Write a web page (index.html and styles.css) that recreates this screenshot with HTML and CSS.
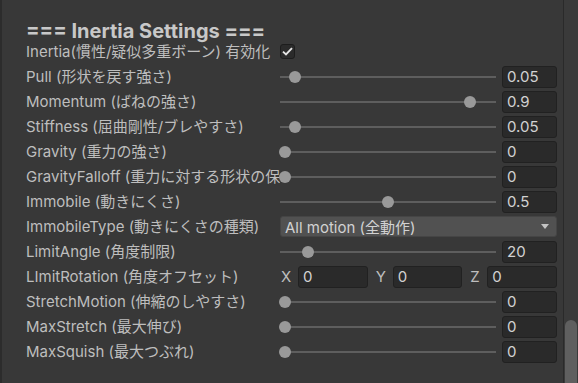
FILE: index.html
```html
<!doctype html>
<html lang=ja>
<head>
<meta charset=utf-8>
<title>Inertia Settings</title>
<link rel="stylesheet" href="styles.css">
</head>
<body>

<!-- inspector section -->

<main class="panel">
	<h2 class="header">=== Inertia Settings ===</h2>

	<div class="props">
		<div class="row">
			<span class="label">Inertia(慣性/疑似多重ボーン) 有効化</span>
			<div class="ctrl">
				<span class="check"><svg width="11" height="9" viewBox="0 0 11 9"><path d="M1 4.6 L4 7.4 L10 1.2" fill="none" stroke="#e4e4e4" stroke-width="1.9"/></svg></span>
			</div>
		</div>

		<div class="row">
			<span class="label">Pull (形状を戻す強さ)</span>
			<div class="ctrl slider"><div class="track"><span class="thumb" style="--v:0.05"></span></div><span class="num">0.05</span></div>
		</div>

		<div class="row">
			<span class="label">Momentum (ばねの強さ)</span>
			<div class="ctrl slider"><div class="track"><span class="thumb" style="--v:0.9"></span></div><span class="num">0.9</span></div>
		</div>

		<div class="row">
			<span class="label">Stiffness (屈曲剛性/ブレやすさ)</span>
			<div class="ctrl slider"><div class="track"><span class="thumb" style="--v:0.05"></span></div><span class="num">0.05</span></div>
		</div>

		<div class="row">
			<span class="label">Gravity (重力の強さ)</span>
			<div class="ctrl slider"><div class="track"><span class="thumb" style="--v:0"></span></div><span class="num">0</span></div>
		</div>

		<div class="row">
			<span class="label">GravityFalloff (重力に対する形状の保持)</span>
			<div class="ctrl slider"><div class="track"><span class="thumb" style="--v:0"></span></div><span class="num">0</span></div>
		</div>

		<div class="row">
			<span class="label">Immobile (動きにくさ)</span>
			<div class="ctrl slider"><div class="track"><span class="thumb" style="--v:0.5"></span></div><span class="num">0.5</span></div>
		</div>

		<div class="row">
			<span class="label">ImmobileType (動きにくさの種類)</span>
			<div class="ctrl">
				<div class="dropdown"><span>All motion (全動作)</span><span class="arrow"></span></div>
			</div>
		</div>

		<div class="row">
			<span class="label">LimitAngle (角度制限)</span>
			<div class="ctrl slider"><div class="track"><span class="thumb" style="--v:0.111"></span></div><span class="num">20</span></div>
		</div>

		<div class="row">
			<span class="label">LImitRotation (角度オフセット)</span>
			<div class="ctrl vector">
				<div class="axis"><span class="axis-name">X</span><span class="num">0</span></div>
				<div class="axis"><span class="axis-name">Y</span><span class="num">0</span></div>
				<div class="axis"><span class="axis-name">Z</span><span class="num">0</span></div>
			</div>
		</div>

		<div class="row">
			<span class="label">StretchMotion (伸縮のしやすさ)</span>
			<div class="ctrl slider"><div class="track"><span class="thumb" style="--v:0"></span></div><span class="num">0</span></div>
		</div>

		<div class="row">
			<span class="label">MaxStretch (最大伸び)</span>
			<div class="ctrl slider"><div class="track"><span class="thumb" style="--v:0"></span></div><span class="num">0</span></div>
		</div>

		<div class="row">
			<span class="label">MaxSquish (最大つぶれ)</span>
			<div class="ctrl slider"><div class="track"><span class="thumb" style="--v:0"></span></div><span class="num">0</span></div>
		</div>
	</div>
</main>

<!-- scrollbar -->

<aside class="scrollbar">
	<span class="scroll-thumb"></span>
</aside>

</body>
</html>
```

FILE: styles.css
```css
/* ====  Base  ==== */

* {
	box-sizing: border-box;
}

html, body {
	height: 100%;
	margin: 0;
}

body {
	display:     flex;
	background:  #383838;
	border-left: 2px solid #2c2c2c;
	overflow:    hidden;
	font-family: Inter, "Noto Sans CJK JP", sans-serif;
	font-size:   15px;
	color:       #bebebe;
}

.panel {
	flex:    1;
	padding: 14px 6px 0 24px;
}

.header {
	margin:      0;
	height:      25px;
	padding-top: 8px;
	font-size:   20px;
	font-weight: 700;
	line-height: 19px;
	white-space: nowrap;
	color:       #c8c8c8;
}

/* ====  Property rows  ==== */

.props {
	display:               grid;
	grid-template-columns: 254px 1fr;
	grid-auto-rows:        25px;
	align-items:           center;
}

.row {
	display: contents;
}

.label {
	white-space: nowrap;
	overflow:    hidden;
	line-height: 25px;
}

.ctrl {
	display:     flex;
	align-items: center;
	height:      25px;
}

.check {
	display:         flex;
	align-items:     center;
	justify-content: center;
	width:           15px;
	height:          15px;
	background:      #2b2b2b;
	border:          1px solid #1d1d1d;
	border-radius:   3px;
}

/* slider: track + number field */

.slider {
	display:               grid;
	grid-template-columns: 1fr 55px;
	column-gap:            6px;
}

.track {
	position:   relative;
	height:     2px;
	background: #5e5e5e;
}

.thumb {
	position:      absolute;
	top:           -5px;
	left:          calc(var(--v) * 206px - 1px);
	width:         12px;
	height:        12px;
	border-radius: 50%;
	background:    #999999;
}

.num {
	display:       flex;
	align-items:   center;
	height:        22px;
	padding-left:  4px;
	background:    #2a2a2a;
	border:        1px solid #212121;
	border-radius: 3px;
	color:         #d2d2d2;
}

/* dropdown */

.dropdown {
	flex:            1;
	display:         flex;
	align-items:     center;
	justify-content: space-between;
	height:          21px;
	padding:         0 7px 0 4px;
	background:      #515151;
	border:          1px solid #454545;
	border-radius:   3px;
	color:           #d2d2d2;
}

.arrow {
	width:        0;
	height:       0;
	border-left:  4.5px solid transparent;
	border-right: 4.5px solid transparent;
	border-top:   5px solid #c4c4c4;
}

/* vector field */

.vector {
	display:               grid;
	grid-template-columns: repeat(3, 1fr);
	column-gap:            7px;
}

.axis {
	display:     flex;
	align-items: center;
}

.axis-name {
	width:        18px;
	padding-left: 1px;
}

.axis .num {
	flex: 1;
}

/* ====  Scrollbar  ==== */

.scrollbar {
	width:       15px;
	border-left: 1px solid #2a2a2a;
	background:  #3a3a3a;
	padding:     320px 0 0 1px;
}

.scroll-thumb {
	display:       block;
	width:         12px;
	height:        100%;
	border-radius: 6px 6px 0 0;
	background:    #5f5f5f;
}
```
